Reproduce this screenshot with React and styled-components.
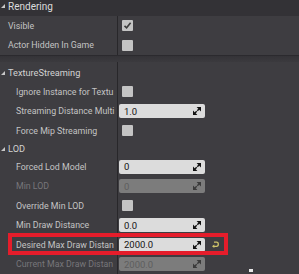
import React from 'react';
import styled, { createGlobalStyle } from 'styled-components';

const Global = createGlobalStyle`
  html, body { margin: 0; padding: 0; background: #3e3d41; }
  body { font-family: Roboto, "Noto Sans", "Liberation Sans", sans-serif; }
  #root { width: 299px; height: 274px; }
`;

const Panel = styled.div`
  position: relative;
  width: 299px;
  height: 274px;
  overflow: hidden;
  background: #3e3d41;
`;

const TopHeader = styled.div`
  height: 16px;
  background: #333236;
  display: flex;
  align-items: flex-start;
  gap: 3px;
  padding-left: 1px;
  color: #dcdcdc;
  font-size: 10px;
  line-height: 13px;
`;

const Tri = styled.span`
  width: 0;
  height: 0;
  border-left: 4px solid transparent;
  border-bottom: 4px solid #c8c8c8;
  margin-top: ${p => p.$top || 4}px;
  flex: none;
`;

const Separator = styled.div`
  height: 6px;
  border-top: 1px solid #2b2a2e;
  background: linear-gradient(#343337, #3b3a3e);
`;

const Row = styled.div`
  position: relative;
  display: grid;
  grid-template-columns: 117px 1px 1fr;
  height: ${p => p.$h || 19.5}px;
`;

const Label = styled.div`
  display: flex;
  align-items: center;
  gap: 3px;
  min-width: 0;
  padding-left: ${p => p.$indent}px;
  color: ${p => (p.$disabled ? '#77767a' : p.$group ? '#d2d2d2' : '#c4c4c4')};
  font-size: ${p => (p.$group ? 9.2 : 8.8)}px;
  white-space: nowrap;
  overflow: hidden;
  text-overflow: clip;
`;

const Divider = styled.div`
  background: #28272a;
`;

const Value = styled.div`
  display: flex;
  align-items: center;
  padding-left: 1px;
  gap: 7px;
`;

const Check = styled.div`
  width: 11px;
  height: 11px;
  margin-left: 3px;
  border-radius: 1px;
  background: #c4c4c4;
  display: flex;
  align-items: center;
  justify-content: center;
`;

const Field = styled.div`
  box-sizing: border-box;
  width: 86px;
  height: 14px;
  border-radius: 2px;
  background: ${p => (p.$disabled ? '#7c7c7c' : '#dcdcdc')};
  color: ${p => (p.$disabled ? '#5e5e5e' : '#141414')};
  font-size: 9.5px;
  display: flex;
  align-items: center;
  justify-content: space-between;
  padding: 0 4px 0 5px;
`;

const Highlight = styled.div`
  position: absolute;
  left: 8px;
  top: -2px;
  width: 220px;
  height: 22px;
  box-sizing: border-box;
  border: 4px solid #e51d2b;
  pointer-events: none;
`;

const Cursor = styled.div`
  position: absolute;
  left: 249px;
  top: 269px;
  width: 4px;
  height: 3px;
  background: #e8e8e8;
`;

const Arrows = ({ color }) => (
  <svg width="8" height="8" viewBox="0 0 8 8">
    <polygon points="3.6,0 8,0 8,4.4" fill={color} />
    <line x1="6" y1="2" x2="4.3" y2="3.7" stroke={color} strokeWidth="1.4" />
    <polygon points="0,3.6 0,8 4.4,8" fill={color} />
    <line x1="2" y1="6" x2="3.7" y2="4.3" stroke={color} strokeWidth="1.4" />
  </svg>
);

const CheckMark = () => (
  <svg width="9" height="9" viewBox="0 0 9 9">
    <path d="M1.5 4.8 L3.6 6.8 L7.6 1.8" fill="none" stroke="#3c3c3c" strokeWidth="1.6" />
  </svg>
);

const ResetIcon = () => (
  <svg width="7" height="7" viewBox="0 0 7 7">
    <path d="M2 1.2 H4.6 Q6.3 1.2 6.3 3.2 Q6.3 5.3 4.6 5.3 H1.8" fill="none" stroke="#cfc46a" strokeWidth="1.3" />
    <polygon points="0,5.3 2.3,3.6 2.3,7" fill="#cfc46a" />
  </svg>
);

const PropRow = ({ label, indent = 16, disabled, check, checked, value, reset, highlight }) => (
  <Row>
    <Label $indent={indent} $disabled={disabled}>{label}</Label>
    <Divider />
    <Value>
      {check && <Check>{checked && <CheckMark />}</Check>}
      {value !== undefined && (
        <Field $disabled={disabled}>
          <span>{value}</span>
          <Arrows color={disabled ? '#3a3a3a' : '#111'} />
        </Field>
      )}
      {reset && <ResetIcon />}
    </Value>
    {highlight && <Highlight />}
  </Row>
);

const GroupRow = ({ label, h }) => (
  <Row $h={h}>
    <Label $indent={1} $group>
      <Tri $top={1} />
      {label}
    </Label>
    <Divider />
    <Value />
  </Row>
);

export default function App() {
  return (
    <>
      <Global />
      <Panel>
        <TopHeader>
          <Tri />
          Rendering
        </TopHeader>
        <PropRow label="Visible" indent={8} check checked />
        <PropRow label="Actor Hidden In Game" indent={8} check />
        <Separator />
        <GroupRow label="TextureStreaming" h={20} />
        <PropRow label="Ignore Instance for Textu" check />
        <PropRow label="Streaming Distance Multi" value="1.0" />
        <PropRow label="Force Mip Streaming" check />
        <GroupRow label="LOD" h={16.5} />
        <PropRow label="Forced Lod Model" value="0" />
        <PropRow label="Min LOD" value="0" disabled />
        <PropRow label="Override Min LOD" check />
        <PropRow label="Min Draw Distance" value="0.0" />
        <PropRow label="Desired Max Draw Distan" value="2000.0" reset highlight />
        <PropRow label="Current Max Draw Distan" value="2000.0" disabled />
        <Cursor />
      </Panel>
    </>
  );
}
